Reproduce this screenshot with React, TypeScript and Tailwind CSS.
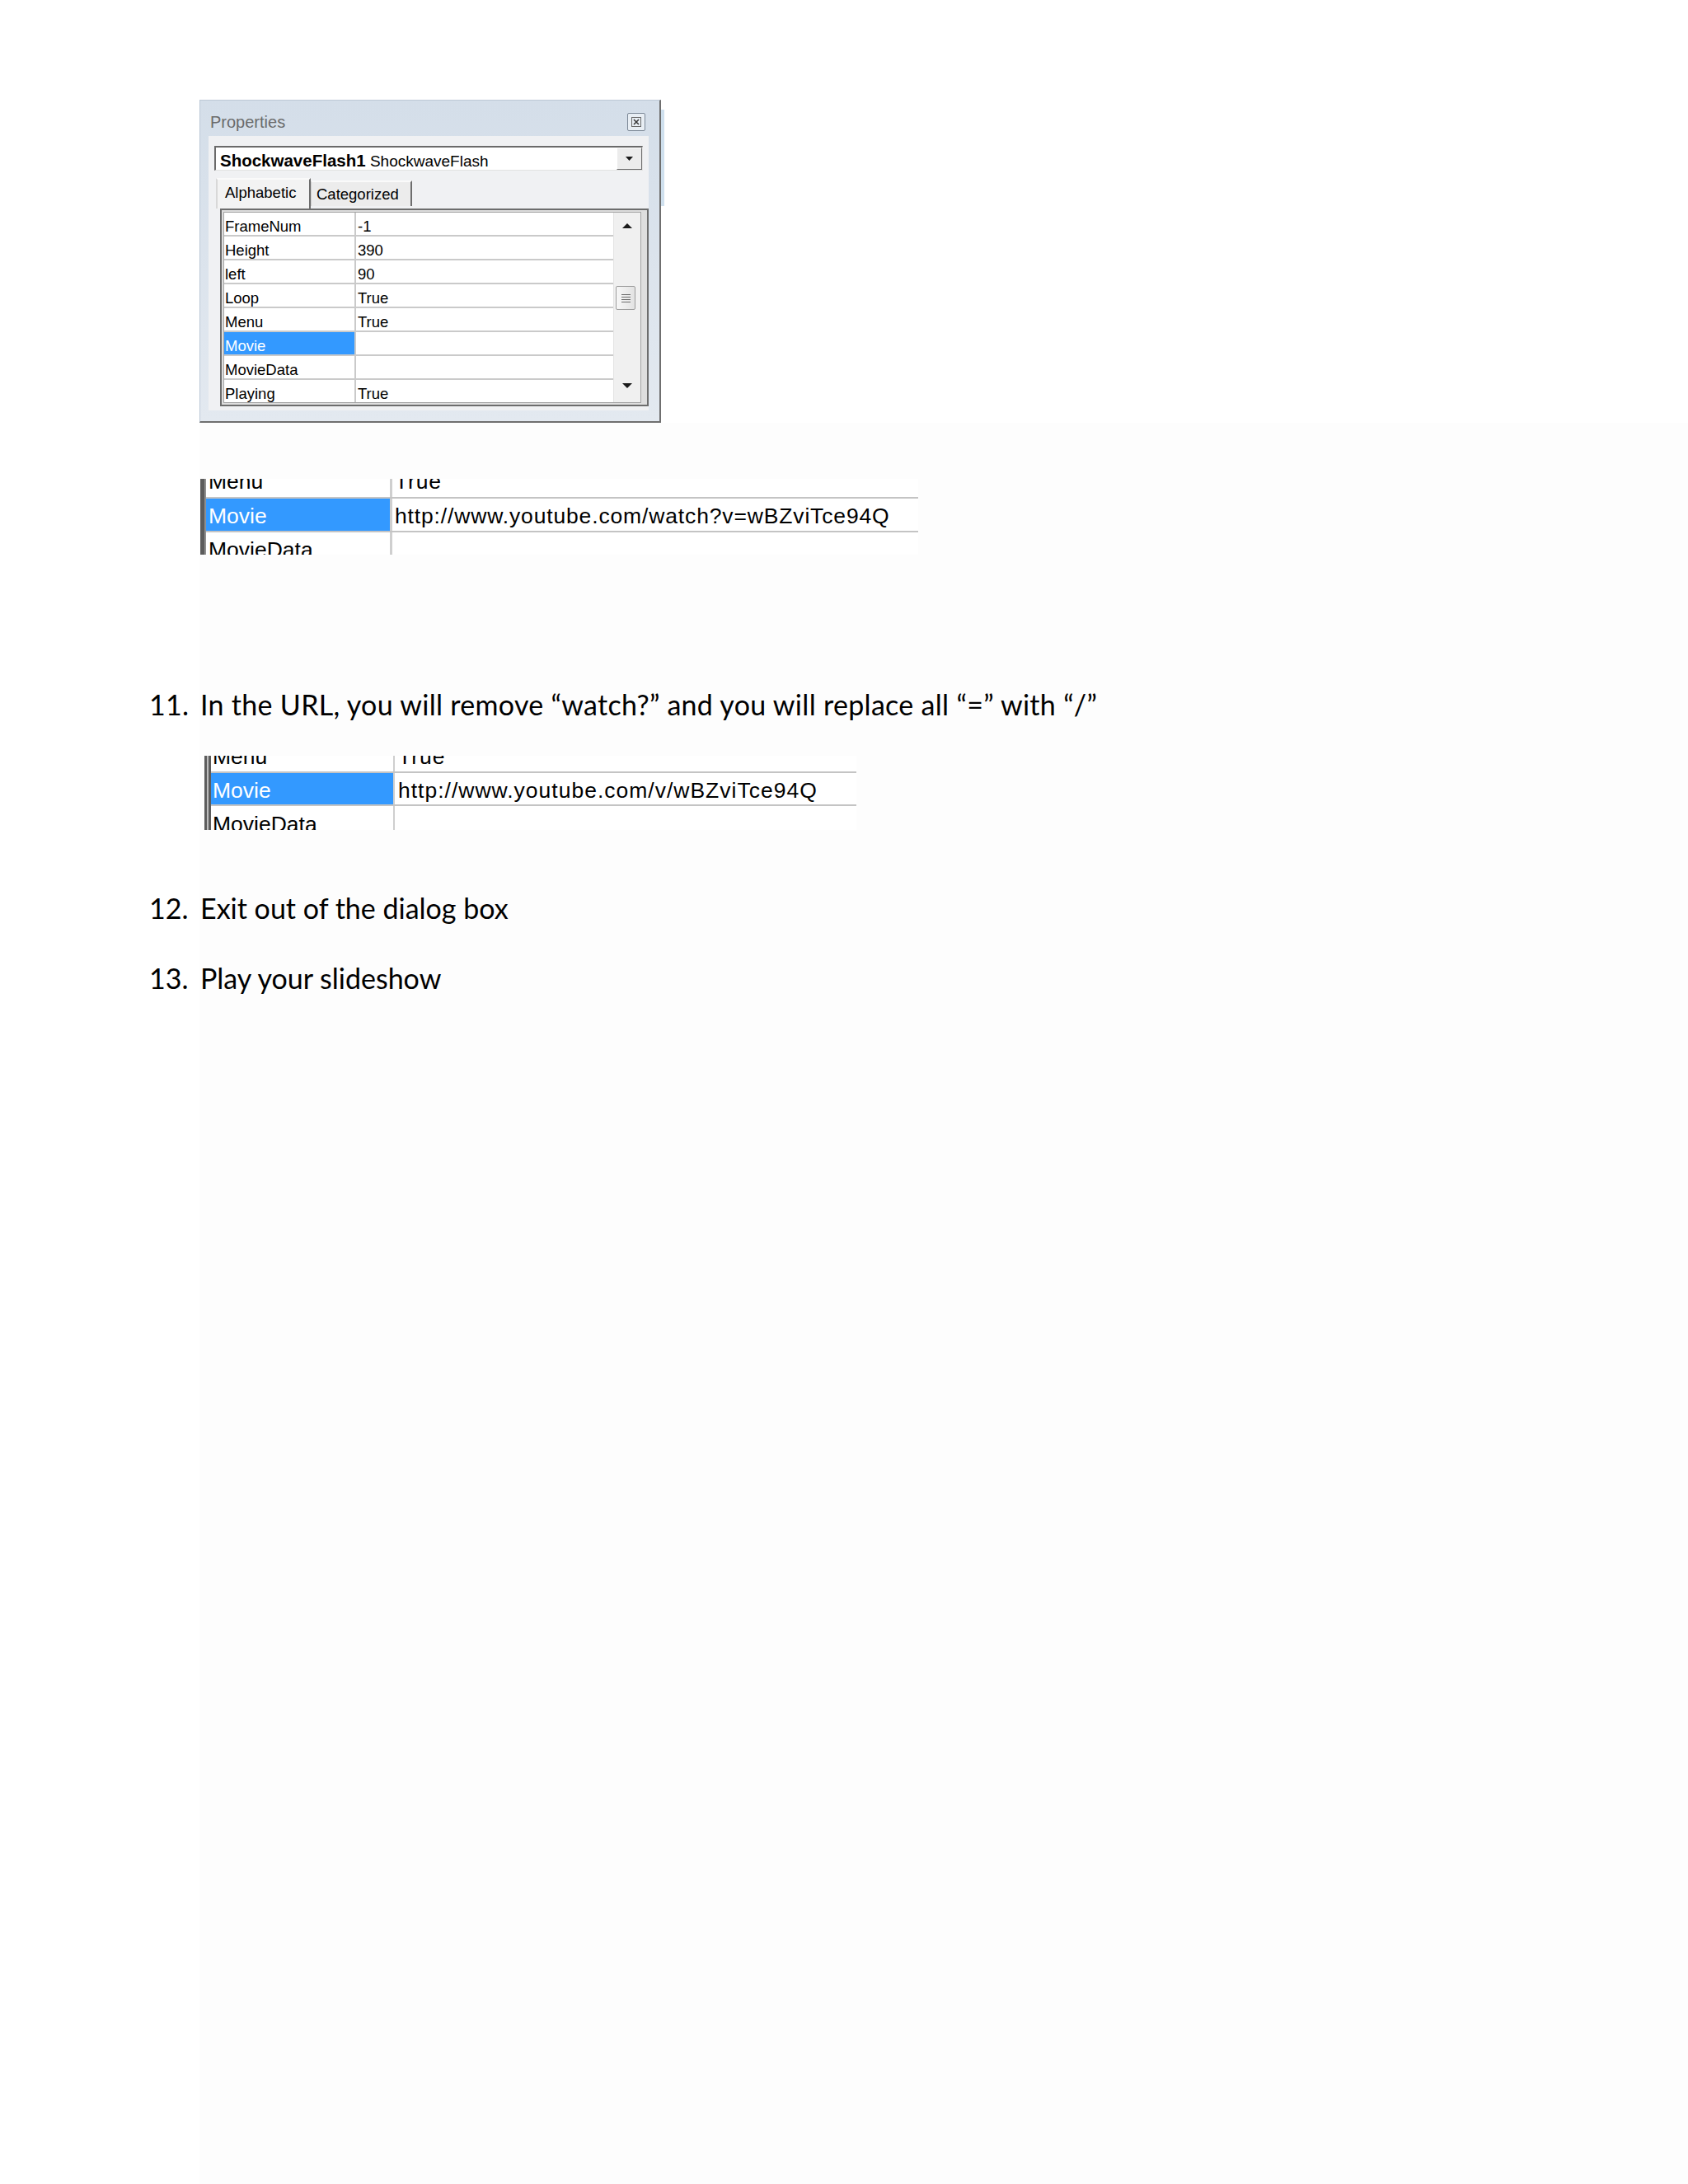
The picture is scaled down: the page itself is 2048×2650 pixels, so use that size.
import React from "react";

const rows = [
  { name: "FrameNum", value: "-1" },
  { name: "Height", value: "390" },
  { name: "left", value: "90" },
  { name: "Loop", value: "True" },
  { name: "Menu", value: "True" },
  { name: "Movie", value: "", selected: true },
  { name: "MovieData", value: "" },
  { name: "Playing", value: "True" },
];

function Arrow({ down = false, w = 12, h = 6 }: { down?: boolean; w?: number; h?: number }) {
  return (
    <svg width={w} height={h} viewBox={`0 0 ${w} ${h}`}>
      <polygon
        points={down ? `0,0 ${w},0 ${w / 2},${h}` : `0,${h} ${w},${h} ${w / 2},0`}
        fill="#1a1a1a"
      />
    </svg>
  );
}

function PropertiesDialog() {
  return (
    <div className="flex items-start">
      <div className="w-[560px] h-[392px] flex flex-col border border-[#bcc8d6] border-r-2 border-b-2 border-r-[#6f6f6f] border-b-[#6f6f6f] bg-[linear-gradient(to_bottom,#d4dee9,#e3e9f0)]">
        {/* Title bar */}
        <div className="h-[43px] flex items-start justify-between pl-[12px] pr-[17px]">
          <span className="mt-[14px] text-[20px] leading-[24px] text-[#6b6b6b]">Properties</span>
          <div className="mt-[15px] w-[22px] h-[22px] rounded-[2px] border border-[#7c8897] bg-[#e8eef4] flex items-center justify-center">
            <svg width="12" height="12" viewBox="0 0 12 12">
              <rect x="0.5" y="0.5" width="11" height="11" fill="none" stroke="#6a6a6a" strokeWidth="1" />
              <path d="M3 3 L9 9 M9 3 L3 9" stroke="#3a3a3a" strokeWidth="1.6" />
            </svg>
          </div>
        </div>

        {/* Panel */}
        <div className="ml-[10px] w-[534px] h-[333px] bg-[#f0f1f3] flex flex-col">
          {/* Object dropdown */}
          <div className="mt-[12px] ml-[7px] w-[520px] h-[30px] flex bg-white border-t-2 border-l-2 border-b border-r border-t-[#6a6a6a] border-l-[#6a6a6a] border-b-[#e2e2e2] border-r-[#e2e2e2]">
            <div className="flex-1 flex items-start pl-[5px]">
              <span className="mt-[5px] text-[19px] leading-[21px] text-black">
                <span className="font-bold text-[20.5px]">ShockwaveFlash1</span> ShockwaveFlash
              </span>
            </div>
            <div className="w-[31px] h-full bg-[#ececec] border border-t-white border-l-white border-r-[#6d6d6d] border-b-[#6d6d6d] flex items-center justify-center">
              <Arrow down w={9} h={5} />
            </div>
          </div>

          {/* Tabs */}
          <div className="mt-[9px] ml-[9px] h-[37px] flex items-end">
            <div className="w-[115px] h-[37px] bg-[#f3f3f3] border-t-2 border-l-2 border-r-2 border-t-[#fafafa] border-l-[#d8d8d8] border-r-[#6d6d6d] flex items-start pl-[9px]">
              <span className="mt-[5px] text-[18.5px] leading-[21px] text-black">Alphabetic</span>
            </div>
            <div className="mb-[3px] w-[123px] h-[31px] bg-[#ececec] border-t-2 border-l border-r-2 border-t-[#fafafa] border-l-[#cfcfcf] border-r-[#6d6d6d] flex items-start pl-[6px]">
              <span className="mt-[4px] text-[18.5px] leading-[21px] text-black">Categorized</span>
            </div>
          </div>

          {/* Property grid */}
          <div className="ml-[14px] w-[520px] h-[240px] border-2 border-[#6d6d6d] bg-[#dedede] p-[2px] pr-[7px]">
            <div className="h-full border border-[#a3a3a3] bg-white flex overflow-hidden">
              <div className="w-[472px] flex flex-col">
                {rows.map((row) => (
                  <div key={row.name} className="h-[29px] shrink-0 flex border-b-2 border-[#cacaca]">
                    <div
                      className={
                        row.selected
                          ? "w-[160px] flex items-end pl-[1px] border-r-2 border-[#cacaca] bg-[#3399ff] text-white"
                          : "w-[160px] flex items-end pl-[1px] border-r-2 border-[#cacaca] text-black"
                      }
                    >
                      <span className="text-[18.5px] leading-[21px]">{row.name}</span>
                    </div>
                    <div className="flex-1 flex items-end pl-[2px] text-black">
                      <span className="text-[18.5px] leading-[21px]">{row.value}</span>
                    </div>
                  </div>
                ))}
              </div>
              {/* Scrollbar */}
              <div className="w-[33px] flex flex-col bg-[#f0f0f0] border-l border-[#e4e4e4]">
                <div className="h-[32px] flex items-center justify-center">
                  <Arrow w={12} h={6} />
                </div>
                <div className="mt-[57px] ml-[2px] w-[24px] h-[29px] rounded-[2px] border border-[#9c9c9c] bg-[linear-gradient(to_right,#f7f7f7,#e2e2e2)] flex flex-col items-center justify-center gap-[2px]">
                  <div className="w-[11px] h-[1px] bg-[#6d6d6d]" />
                  <div className="w-[11px] h-[1px] bg-[#6d6d6d]" />
                  <div className="w-[11px] h-[1px] bg-[#6d6d6d]" />
                  <div className="w-[11px] h-[1px] bg-[#6d6d6d]" />
                </div>
                <div className="flex-1" />
                <div className="h-[40px] flex items-center justify-center">
                  <Arrow down w={12} h={6} />
                </div>
              </div>
            </div>
          </div>
        </div>
      </div>
      {/* edge of the window behind */}
      <div className="mt-[12px] w-[4px] h-[117px] bg-[#cfe0ee]" />
    </div>
  );
}

type SnippetProps = {
  ml: string;
  bar: string;
  nameW: string;
  divider: string;
  valueW: string;
  heights: [string, string, string];
  textTop: [string, string, string];
  namePl: string;
  valuePl: string;
  tracking: string;
  url: string;
};

function MovieSnippet(p: SnippetProps) {
  const cells = [
    { name: "Menu", value: "True", line: true },
    { name: "Movie", value: p.url, line: true, selected: true },
    { name: "MovieData", value: "", line: false },
  ];
  return (
    <div className={`flex bg-white ${p.ml}`}>
      <div className={p.bar} />
      <div className="flex flex-col font-['Liberation_Sans',Arial,sans-serif] text-[26.5px] leading-none">
        {cells.map((c, i) => (
          <div
            key={c.name}
            className={`flex overflow-hidden ${p.heights[i]} ${c.line ? "border-b-2 border-[#c4c4c4]" : ""}`}
          >
            <div
              className={`${p.nameW} ${p.divider} ${p.namePl} flex items-start ${
                c.selected ? "bg-[#3399ff] text-white" : "text-black"
              }`}
            >
              <span className={`${p.textTop[i]} whitespace-nowrap`}>{c.name}</span>
            </div>
            <div className={`${p.valueW} ${p.valuePl} flex items-start text-black`}>
              <span className={`${p.textTop[i]} whitespace-nowrap ${p.tracking}`}>{c.value}</span>
            </div>
          </div>
        ))}
      </div>
    </div>
  );
}

function Step({ n, children, className }: { n: string; children: React.ReactNode; className: string }) {
  return (
    <div className={`flex pl-[181px] text-[34px] leading-[40px] text-black ${className}`}>
      <span className="w-[62px] shrink-0">{n}</span>
      <span className="whitespace-nowrap">{children}</span>
    </div>
  );
}

export default function App() {
  return (
    <div className="w-[2048px] h-[2650px] flex flex-col bg-white">
      {/* Screenshot of the Properties window */}
      <section className="h-[513px] shrink-0 pt-[121px] pl-[242px] font-['Liberation_Sans',Arial,sans-serif]">
        <PropertiesDialog />
      </section>

      {/* Steps */}
      <section className="flex-1 flex flex-col items-start bg-[linear-gradient(to_right,#ffffff_242px,#fdfdfd_242px)] font-['Lato','Open_Sans',sans-serif]">
        <div className="mt-[68px]">
          <MovieSnippet
            ml="ml-[243px]"
            bar="w-[7px] bg-[#5c5c5c] border-r-2 border-[#8f8f8f]"
            nameW="w-[226px]"
            divider="border-r-[3px] border-[#cfcfcf]"
            valueW="w-[638px]"
            heights={["h-[24px]", "h-[41px]", "h-[27px]"]}
            textTop={["-mt-[10px]", "mt-[8px]", "mt-[8px]"]}
            namePl="pl-[3px]"
            valuePl="pl-[3px]"
            tracking="tracking-[0.85px]"
            url="http://www.youtube.com/watch?v=wBZviTce94Q"
          />
        </div>

        <Step n="11." className="mt-[162px] tracking-[0.3px]">
          In the URL, you will remove “watch?” and you will replace all “=” with “/”
        </Step>

        <div className="mt-[42px]">
          <MovieSnippet
            ml="ml-[248px]"
            bar="w-[8px] border-l-[3px] border-r-[3px] border-[#5c5c5c] bg-[#bdbdbd]"
            nameW="w-[223px]"
            divider="border-r-2 border-[#cfcfcf]"
            valueW="w-[560px]"
            heights={["h-[21px]", "h-[40px]", "h-[29px]"]}
            textTop={["-mt-[12px]", "mt-[8px]", "mt-[9px]"]}
            namePl="pl-[2px]"
            valuePl="pl-[4px]"
            tracking="tracking-[1px]"
            url="http://www.youtube.com/v/wBZviTce94Q"
          />
        </div>

        <Step n="12." className="mt-[75px]">
          Exit out of the dialog box
        </Step>
        <Step n="13." className="mt-[45px]">
          Play your slideshow
        </Step>
      </section>
    </div>
  );
}
